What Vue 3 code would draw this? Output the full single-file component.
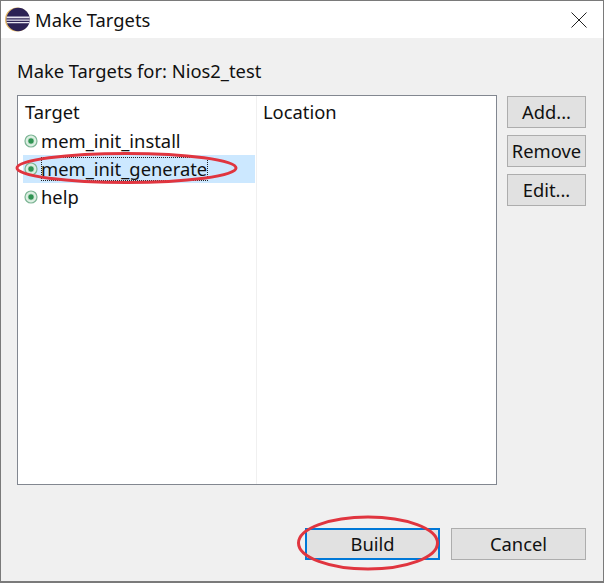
<script setup>
const rows = [
  { name: 'mem_init_install', selected: false },
  { name: 'mem_init_generate', selected: true },
  { name: 'help', selected: false }
]
const sideButtons = ['Add...', 'Remove', 'Edit...']
</script>

<template>
  <div class="window">
    <header class="titlebar">
      <svg class="logo" width="25" height="25" viewBox="0 0 24 24">
        <circle cx="11.6" cy="12" r="11.6" fill="#e3b766" />
        <circle cx="12.6" cy="12" r="11.2" fill="#2c2255" />
        <path d="M1.6 9.2H23.6V10.7H1.6zM1.4 11.9H23.8V13.2H1.4zM1.8 14.3H23.4V15.6H1.8z" fill="#e6e4f0" />
      </svg>
      <span class="title">Make Targets</span>
      <svg class="close" width="16" height="16" viewBox="0 0 16 16">
        <path d="M0.5 0.5L15.5 15.5M15.5 0.5L0.5 15.5" stroke="#222" stroke-width="1" fill="none" />
      </svg>
    </header>

    <main class="content">
      <div class="label">Make Targets for: Nios2_test</div>

      <div class="middle">
        <div class="table">
          <div class="col col-target">
            <div class="head">Target</div>
            <div
              v-for="row in rows"
              :key="row.name"
              class="row"
              :class="{ selected: row.selected }"
            >
              <svg class="target-icon" width="14" height="14" viewBox="0 0 14 14">
                <circle cx="7" cy="7" r="6" fill="#dcefe2" stroke="#7db595" stroke-width="1.2" />
                <circle cx="7" cy="7" r="3.2" fill="#2f9352" stroke="#fff" stroke-width="0.6" />
              </svg>
              <span class="row-text">{{ row.name }}</span>
            </div>
          </div>
          <div class="col col-location">
            <div class="head">Location</div>
          </div>
        </div>

        <div class="side">
          <button v-for="b in sideButtons" :key="b" class="btn side-btn">{{ b }}</button>
        </div>
      </div>

      <footer class="footer">
        <button class="btn foot-btn default">Build</button>
        <button class="btn foot-btn">Cancel</button>
      </footer>
    </main>

    <svg class="marks" width="604" height="583" viewBox="0 0 604 583">
      <ellipse cx="126.500" cy="168" rx="109.500" ry="14.500" />
      <ellipse cx="368" cy="543" rx="69.500" ry="26" />
    </svg>
  </div>
</template>

<style>
html, body { margin: 0; padding: 0; background: #f0f0f0; }
</style>

<style scoped>
.window {
  position: relative;
  width: 604px;
  height: 583px;
  box-sizing: border-box;
  border: 1px solid #7a7a7a;
  border-bottom-width: 2px;
  display: flex;
  flex-direction: column;
  background: #f0f0f0;
  font-family: "Noto Sans", "Liberation Sans", sans-serif;
  font-size: 18.35px;
  color: #111;
  overflow: hidden;
}
.titlebar {
  height: 37px;
  flex: none;
  background: #fff;
  display: flex;
  align-items: center;
  padding: 0 16px 0 4px;
}
.logo { flex: none; }
.title { margin-left: 5px; }
.close { margin-left: auto; }
.content {
  flex: 1;
  display: flex;
  flex-direction: column;
  padding: 0 17px 21px 16px;
}
.label {
  height: 57px;
  line-height: 66px;
  flex: none;
}
.middle {
  flex: 1;
  display: flex;
  gap: 10px;
  align-items: flex-start;
}
.table {
  width: 480px;
  height: 390px;
  box-sizing: border-box;
  border: 1px solid #828790;
  background: #fff;
  display: flex;
  padding-left: 5px;
}
.col-target { width: 233px; flex: none; border-right: 1px solid #f0f0f0; }
.col-location { flex: 1; }
.head {
  height: 31px;
  line-height: 32px;
  padding-left: 2px;
}
.col-location .head { padding-left: 6px; }
.row {
  height: 28px;
  display: flex;
  align-items: center;
  padding-left: 1px;
  margin-right: 1px;
}
.row.selected { background: #cce8ff; }
.target-icon { flex: none; }
.row-text { margin-left: 3px; line-height: 24px; }
.row.selected .row-text { outline: 1px dotted #222; outline-offset: -1px; padding-right: 1px; }
.side {
  display: flex;
  flex-direction: column;
  gap: 7px;
  margin-top: 1px;
}
.btn {
  box-sizing: border-box;
  border: 1px solid #adadad;
  background: #e1e1e1;
  font: inherit;
  color: #111;
  padding: 0 0 2px;
  margin: 0;
}
.side-btn { width: 79px; height: 32px; }
.footer {
  flex: none;
  display: flex;
  justify-content: flex-end;
  gap: 11px;
}
.foot-btn { width: 135px; height: 32px; }
.foot-btn.default { border: 2px solid #0078d7; }
.marks {
  position: absolute;
  left: -1px;
  top: -1px;
  pointer-events: none;
}
.marks ellipse { fill: none; stroke: #e0353f; stroke-width: 3; }
</style>
